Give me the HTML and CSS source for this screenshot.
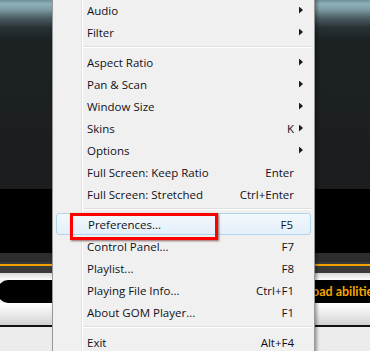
FILE: index.html
```html
<!DOCTYPE html>
<html>
<head>
<meta charset="utf-8">
<link rel="stylesheet" href="styles.css">
</head>
<body>
<div class="stage">
  <div class="player">
    <div class="band screen-top"></div>
    <div class="band screen"></div>
    <div class="band black"></div>
    <div class="band dark-strip"></div>
    <div class="band seek"><div class="seek-line"></div></div>
    <div class="band light-line"></div>
    <div class="band control">
      <div class="pill"><span class="ticker">oad abilitie</span></div>
    </div>
    <div class="band control-bottom"></div>
    <div class="band black-line"></div>
    <div class="band status"></div>
  </div>

  <div class="menu">
    <div class="gutter"></div>
    <div class="item"><span class="label">Audio</span><span class="key"></span><span class="arrow"></span></div>
    <div class="item"><span class="label">Filter</span><span class="key"></span><span class="arrow"></span></div>
    <div class="sep"></div>
    <div class="item"><span class="label">Aspect Ratio</span><span class="key"></span><span class="arrow"></span></div>
    <div class="item"><span class="label">Pan &amp; Scan</span><span class="key"></span><span class="arrow"></span></div>
    <div class="item"><span class="label">Window Size</span><span class="key"></span><span class="arrow"></span></div>
    <div class="item"><span class="label">Skins</span><span class="key">K</span><span class="arrow"></span></div>
    <div class="item"><span class="label">Options</span><span class="key"></span><span class="arrow"></span></div>
    <div class="item"><span class="label">Full Screen: Keep Ratio</span><span class="key">Enter</span><span class="noarrow"></span></div>
    <div class="item"><span class="label">Full Screen: Stretched</span><span class="key">Ctrl+Enter</span><span class="noarrow"></span></div>
    <div class="sep"></div>
    <div class="item hot"><span class="label">Preferences...</span><span class="key">F5</span><span class="noarrow"></span><div class="callout"></div></div>
    <div class="item"><span class="label">Control Panel...</span><span class="key">F7</span><span class="noarrow"></span></div>
    <div class="item"><span class="label">Playlist...</span><span class="key">F8</span><span class="noarrow"></span></div>
    <div class="item"><span class="label">Playing File Info...</span><span class="key">Ctrl+F1</span><span class="noarrow"></span></div>
    <div class="item"><span class="label">About GOM Player...</span><span class="key">F1</span><span class="noarrow"></span></div>
    <div class="sep"></div>
    <div class="item"><span class="label">Exit</span><span class="key">Alt+F4</span><span class="noarrow"></span></div>
  </div>
</div>
</body>
</html>
```

FILE: styles.css
```css
html, body {
  margin: 0;
  padding: 0;
}
body {
  width: 370px;
  height: 351px;
  overflow: hidden;
  font-family: "Open Sans", "Noto Sans", sans-serif;
}
.stage {
  position: relative;
  width: 370px;
  height: 351px;
  overflow: hidden;
}
.player {
  display: flex;
  flex-direction: column;
  width: 370px;
  height: 351px;
}
.band { flex: none; width: 100%; }
.screen-top {
  height: 40px;
  background: linear-gradient(to bottom, #6f9299 0px, #8eb0b8 4px, #7b999f 10px, #4a5d62 18px, #273033 28px, #1c2224 40px);
}
.screen {
  height: 149px;
  background: linear-gradient(to bottom, #1c2224, #1b1d1e);
}
.black { height: 64px; background: #000; }
.dark-strip { height: 9px; background: #2d2d2d; }
.seek {
  height: 11px;
  background: #3a3a3a;
  display: flex;
  flex-direction: column;
  padding-top: 2px;
  box-sizing: border-box;
}
.seek-line { height: 2px; background: #f0a000; }
.light-line { height: 7px; background: linear-gradient(to bottom, #d8d8d8, #ffffff); }
.control {
  height: 23px;
  background: #f2f2f2;
  display: flex;
}
.pill {
  flex: 1;
  background: #000;
  border-radius: 10px 0 0 10px;
  margin-left: -2px;
  display: flex;
  align-items: center;
  padding-left: 314px;
  overflow: hidden;
  white-space: nowrap;
}
.ticker {
  color: #f5a400;
  font-family: Lato, "Open Sans", sans-serif;
  font-weight: 700;
  font-size: 12.5px;
}
.control-bottom {
  height: 22px;
  background: linear-gradient(to bottom, #ffffff, #e6e6e6 60%, #d2d2d2);
}
.black-line { height: 2px; background: #111; }
.status { height: 24px; background: #ececec; }

.menu {
  position: absolute;
  left: 52px;
  top: -4px;
  width: 257px;
  background: #f0f0f0;
  border: 1px solid #979797;
  padding: 2px;
  box-shadow: 2px 2px 3px rgba(0,0,0,0.35);
  font-size: 11.5px;
  color: #101020;
}
.gutter {
  position: absolute;
  left: 28px;
  top: 0;
  bottom: 0;
  width: 1px;
  background: #e2e3e3;
  border-right: 1px solid #ffffff;
}
.item {
  position: relative;
  height: 22px;
  display: flex;
  align-items: center;
  padding-left: 32px;
  padding-right: 9px;
}
.label { flex: 1; white-space: nowrap; }
.key { white-space: nowrap; }
.arrow, .noarrow {
  width: 4px;
  height: 7px;
  margin-left: 5px;
  flex: none;
}
.arrow {
  background: #1a1a1a;
  clip-path: polygon(0 0, 100% 50%, 0 100%);
}
.sep {
  height: 8px;
  margin-left: 27px;
  display: flex;
  flex-direction: column;
  justify-content: center;
}
.sep::before {
  content: "";
  display: block;
  height: 1px;
  background: #e0e0e0;
  border-bottom: 1px solid #ffffff;
}
.hot {
  border: 1px solid #aed6ef;
  border-radius: 3px;
  background: linear-gradient(to bottom, #f3f8fc, #e3eff9);
  margin: 0 0 0 1px;
  width: 255px;
  box-sizing: border-box;
  padding-left: 31px;
  padding-right: 8px;
}
.callout {
  position: absolute;
  left: 13px;
  top: -1px;
  width: 142px;
  height: 21px;
  border: 3px solid #ff0000;
  box-shadow: 1px 1px 2px rgba(80,0,0,0.6);
}
```
